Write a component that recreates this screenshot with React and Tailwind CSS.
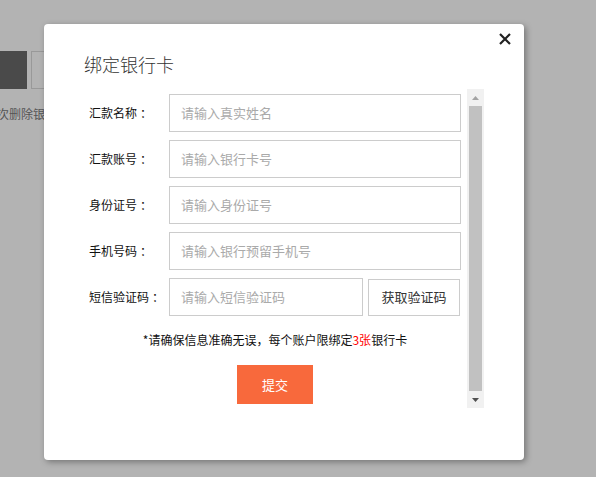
import React from 'react';

const fields = [
    { label: '汇款名称', placeholder: '请输入真实姓名' },
    { label: '汇款账号', placeholder: '请输入银行卡号' },
    { label: '身份证号', placeholder: '请输入身份证号' },
    { label: '手机号码', placeholder: '请输入银行预留手机号' },
];

const font = { fontFamily: '"Noto Sans CJK SC", "Noto Sans", sans-serif' };

const Label = ({ text }) => (
    <span className="w-[80px] text-[12px] text-[#111] whitespace-nowrap">
        {text}<span className="ml-[3px]">：</span>
    </span>
);

const App = () => {
    return (
        <div className="relative w-[596px] h-[477px] overflow-hidden bg-[#b3b3b3]" style={font}>
            {/* dimmed page behind the dialog */}
            <div className="pt-[51px]">
                <div className="flex gap-[4px]">
                    <div className="w-[27px] h-[38px] bg-[#4a4a4a]"></div>
                    <div className="w-[60px] h-[38px] border border-[#999]"></div>
                </div>
                <p className="mt-[15px] -ml-[3px] text-[12px] leading-[20px] text-[#555] whitespace-nowrap">次删除银行卡</p>
            </div>

            {/* dialog */}
            <div className="absolute left-[44px] top-[24px] w-[480px] h-[436px] bg-white rounded-[4px] shadow-[2px_2px_6px_rgba(0,0,0,0.35)]">
                <button className="absolute right-[13px] top-[9px] w-[12px] h-[12px]">
                    <svg viewBox="0 0 12 12" className="w-[12px] h-[12px]">
                        <path d="M1 1 L11 11 M11 1 L1 11" stroke="#222" strokeWidth="2.2" fill="none" />
                    </svg>
                </button>

                <h2 className="pt-[29px] pl-[40px] text-[18px] leading-[22px] font-light text-[#333]">绑定银行卡</h2>

                <div className="mt-[14px] flex">
                    <div className="w-[423px]">
                        <div className="ml-[45px] w-[372px] pt-[5px]">
                            <div className="flex flex-col gap-[8px]">
                                {fields.map((f) => (
                                    <div key={f.label} className="flex items-center">
                                        <Label text={f.label} />
                                        <div className="w-[292px] h-[38px] border border-[#ccc] flex items-center pl-[11px] text-[13px] text-[#aaa]">
                                            {f.placeholder}
                                        </div>
                                    </div>
                                ))}
                                <div className="flex items-center">
                                    <Label text="短信验证码" />
                                    <div className="w-[194px] h-[38px] border border-[#ccc] flex items-center pl-[11px] text-[13px] text-[#aaa]">
                                        请输入短信验证码
                                    </div>
                                    <button className="ml-[5px] w-[92px] h-[37px] border border-[#ccc] bg-white text-[13px] text-[#333]">
                                        获取验证码
                                    </button>
                                </div>
                            </div>

                            <p className="mt-[14px] text-center text-[12px] leading-[20px] text-[#111]">
                                *请确保信息准确无误，每个账户限绑定<span className="text-[#f00]">3张</span>银行卡
                            </p>

                            <div className="mt-[15px] flex justify-center">
                                <button className="w-[76px] h-[39px] bg-[#f8693c] text-white text-[13px]">提交</button>
                            </div>
                        </div>
                    </div>

                    {/* scrollbar */}
                    <div className="w-[17px] h-[319px] bg-[#f1f1f1] flex flex-col">
                        <div className="h-[17px] flex items-center justify-center">
                            <svg viewBox="0 0 7 4" className="w-[7px] h-[4px]">
                                <path d="M3.5 0 L7 4 L0 4 Z" fill="#a3a3a3" />
                            </svg>
                        </div>
                        <div className="flex-1 mx-[2px] bg-[#c1c1c1]"></div>
                        <div className="h-[17px] flex items-center justify-center">
                            <svg viewBox="0 0 7 4" className="w-[7px] h-[4px]">
                                <path d="M0 0 L7 0 L3.5 4 Z" fill="#505050" />
                            </svg>
                        </div>
                    </div>
                </div>
            </div>
        </div>
    );
};

export default App;
